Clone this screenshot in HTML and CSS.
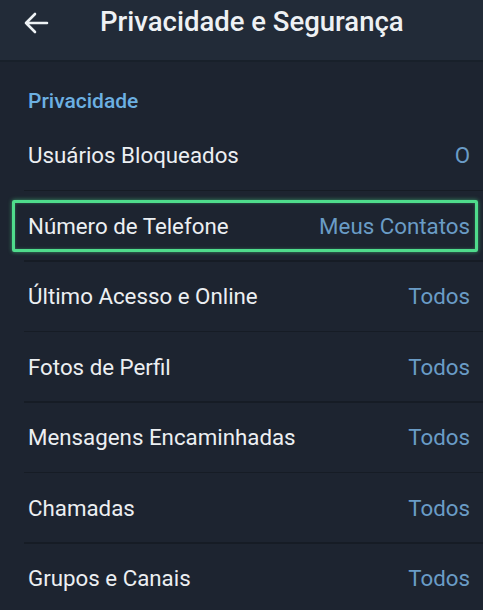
FILE: index.html
```html
<!DOCTYPE html>
<html lang="pt">
<head>
<meta charset="utf-8">
<title>Privacidade e Segurança</title>
<link rel="stylesheet" href="styles.css">
</head>
<body>
<div class="screen">
  <header class="topbar">
    <svg class="back" width="26" height="22" viewBox="0 0 26 22" aria-hidden="true">
      <path d="M24 11H3M12 2L3 11l9 9" fill="none" stroke="#eef2f5" stroke-width="2.6" stroke-linecap="round" stroke-linejoin="round"/>
    </svg>
    <h1 class="title">Privacidade e Segurança</h1>
  </header>
  <section class="section">
    <div class="section-title">Privacidade</div>
    <ul class="list">
      <li class="row"><span class="label">Usuários Bloqueados</span><span class="value">O</span></li>
      <li class="row highlighted"><span class="label">Número de Telefone</span><span class="value">Meus Contatos</span></li>
      <li class="row"><span class="label">Último Acesso e Online</span><span class="value">Todos</span></li>
      <li class="row"><span class="label">Fotos de Perfil</span><span class="value">Todos</span></li>
      <li class="row"><span class="label">Mensagens Encaminhadas</span><span class="value">Todos</span></li>
      <li class="row"><span class="label">Chamadas</span><span class="value">Todos</span></li>
      <li class="row"><span class="label">Grupos e Canais</span><span class="value">Todos</span></li>
    </ul>
  </section>
</div>
</body>
</html>
```
FILE: styles.css
```css
* { box-sizing: border-box; }
html, body {
  margin: 0;
  padding: 0;
  background: #1d2430;
  font-family: Roboto, "Noto Sans", "Liberation Sans", sans-serif;
}
.screen {
  width: 483px;
  height: 610px;
  overflow: hidden;
  background: #1d2430;
}
.topbar {
  height: 62px;
  background: #222b38;
  display: flex;
  align-items: center;
  padding: 0 0 16px 23px;
  border-bottom: 2px solid #18202a;
}
.back { display: block; margin-top: 1px; }
.title {
  margin: 0 0 0 51px;
  color: #eef1f4;
  font-size: 27.5px;
  font-weight: 500;
  line-height: 1;
}
.section-title {
  color: #6cb0e2;
  font-size: 21px;
  font-weight: 500;
  padding: 28px 0 0 28px;
  height: 58px;
  line-height: 22px;
}
.list { list-style: none; margin: 0; padding: 0; }
.row {
  position: relative;
  height: 70.5px;
  display: flex;
  align-items: center;
  justify-content: space-between;
  padding: 0 13px 0 28px;
}
.row + .row::before {
  content: "";
  position: absolute;
  top: -1px;
  left: 24px;
  right: 0;
  height: 1.5px;
  background: #161c25;
}
.label {
  color: #eceff2;
  font-size: 22.3px;
}
.value {
  color: #6a9cc6;
  font-size: 22.3px;
}
.highlighted::after {
  content: "";
  position: absolute;
  top: 9px;
  bottom: 9px;
  left: 12px;
  right: 5px;
  border: 3px solid #4fdc8c;
  border-radius: 2px;
  box-shadow: 0 0 4px rgba(79, 220, 140, 0.6), inset 0 0 3px rgba(79, 220, 140, 0.4);
}
```
